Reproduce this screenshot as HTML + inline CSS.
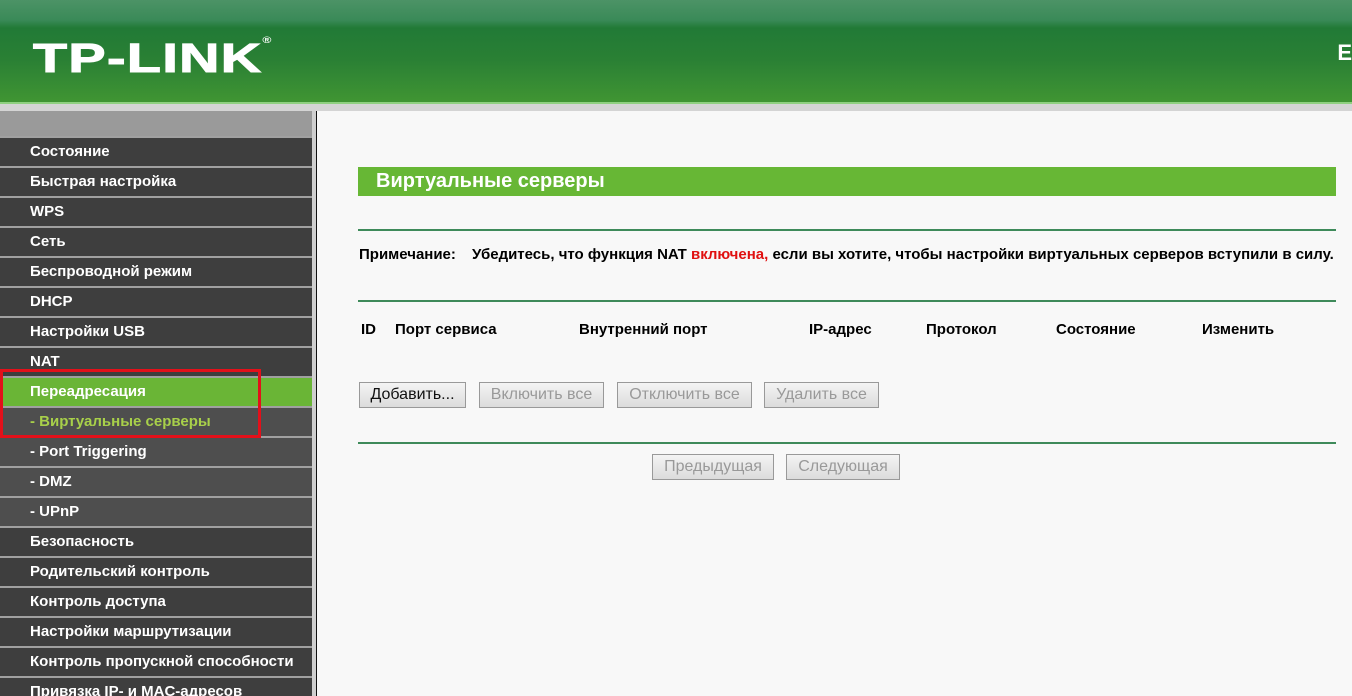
<!DOCTYPE html>
<html><head><meta charset="utf-8"><style>
*{margin:0;padding:0;box-sizing:border-box}
html,body{width:1352px;height:696px;overflow:hidden}
body{background:#f8f8f8;font-family:"Liberation Sans",Arial,sans-serif;position:relative}
#hdr{position:absolute;left:0;top:0;width:1352px;height:104px;background:linear-gradient(#4c9366 0,#3a8a58 20px,#217a36 28px,#2a8034 60px,#3f9433 100px);border-bottom:2px solid #8fd080}
#hdr .logo{position:absolute;left:33px;top:35px;color:#fff;font:900 41px "Liberation Sans",sans-serif;letter-spacing:1px;transform:scaleX(1.36);transform-origin:left;-webkit-text-stroke:1px #fff}
#hdr .e{position:absolute;right:0;top:40px;color:#fff;font:bold 22px "Liberation Sans",sans-serif}
#gbar{position:absolute;left:0;top:104px;width:1352px;height:7px;background:#d4d4d4}
#side{position:absolute;left:0;top:111px;width:312px;height:585px;background:#999;overflow:hidden}
#side .top{height:25px;background:#9a9a9a}
#side div.i{height:30px;border-top:2px solid #a0a0a0;background:#3e3e3e;color:#fff;font-weight:bold;font-size:15px;padding-left:30px;line-height:27px;white-space:nowrap}
#side div.s{background:#4e4e4e}
#side div.g{background:#6ab536}
#side div.y{color:#a8d04a}
#sb{position:absolute;left:312px;top:111px;width:5px;height:585px;background:#cfcfcf;border-right:1px solid #111}
#red{position:absolute;left:0;top:369px;width:261px;height:69px;border:3px solid #e3101a}
.title{position:absolute;left:358px;top:167px;width:978px;height:29px;background:#67b735;color:#fff;font-weight:bold;font-size:20px;padding-left:18px;line-height:29px}
.ln{position:absolute;left:358px;width:978px;height:2px;background:#3e8a5a}
.t{position:absolute;font-size:15px;color:#000;white-space:nowrap}
.b{font-weight:bold}
.btn{position:absolute;height:26px;border:1px solid #999;background:linear-gradient(#f4f4f4,#dcdcdc);font-size:16px;color:#999;text-align:center;line-height:24px;white-space:nowrap}
</style></head><body>
<div id="hdr"><div class="logo">TP-LINK<sup style="font-size:9px;vertical-align:top;-webkit-text-stroke:0">®</sup></div><div class="e">E</div></div>
<div id="gbar"></div>
<div id="side"><div class="top"></div>
<div class="i">Состояние</div><div class="i">Быстрая настройка</div><div class="i">WPS</div><div class="i">Сеть</div><div class="i">Беспроводной режим</div><div class="i">DHCP</div><div class="i">Настройки USB</div><div class="i">NAT</div><div class="i g">Переадресация</div><div class="i s y">- Виртуальные серверы</div><div class="i s">- Port Triggering</div><div class="i s">- DMZ</div><div class="i s">- UPnP</div><div class="i">Безопасность</div><div class="i">Родительский контроль</div><div class="i">Контроль доступа</div><div class="i">Настройки маршрутизации</div><div class="i">Контроль пропускной способности</div><div class="i">Привязка IP- и MAC-адресов</div>
</div>
<div id="sb"></div>
<div id="red"></div>
<div class="title">Виртуальные серверы</div>
<div class="ln" style="top:229px"></div>
<div class="t b" style="left:359px;top:246px">Примечание:</div>
<div class="t b" style="left:472px;top:246px">Убедитесь, что функция NAT <span style="color:#e01010">включена,</span> если вы хотите, чтобы настройки виртуальных серверов вступили в силу.</div>
<div class="ln" style="top:300px"></div>
<div class="t b" style="left:361px;top:321px">ID</div>
<div class="t b" style="left:395px;top:321px">Порт сервиса</div>
<div class="t b" style="left:579px;top:321px">Внутренний порт</div>
<div class="t b" style="left:809px;top:321px">IP-адрес</div>
<div class="t b" style="left:926px;top:321px">Протокол</div>
<div class="t b" style="left:1056px;top:321px">Состояние</div>
<div class="t b" style="left:1202px;top:321px">Изменить</div>
<div class="btn" style="left:359px;top:382px;width:107px;color:#111">Добавить...</div>
<div class="btn" style="left:479px;top:382px;width:125px">Включить все</div>
<div class="btn" style="left:617px;top:382px;width:135px">Отключить все</div>
<div class="btn" style="left:764px;top:382px;width:115px">Удалить все</div>
<div class="ln" style="top:442px"></div>
<div class="btn" style="left:652px;top:454px;width:122px">Предыдущая</div>
<div class="btn" style="left:786px;top:454px;width:114px">Следующая</div>
</body></html>
